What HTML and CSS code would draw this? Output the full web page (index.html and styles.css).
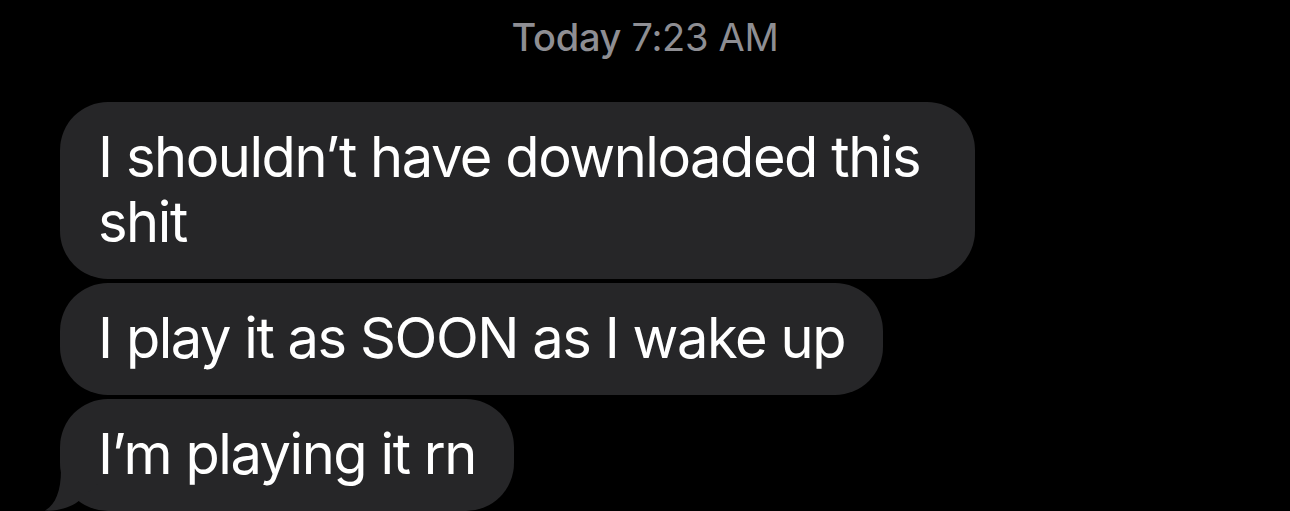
FILE: index.html
```html
<!DOCTYPE html>
<html>
<head>
<meta charset="utf-8">
<link rel="stylesheet" href="styles.css">
</head>
<body>
<div class="thread">
  <div class="stamp"><span class="day">Today</span> 7:23 AM</div>
  <div class="messages">
    <div class="bubble">I shouldn’t have downloaded this shit</div>
    <div class="bubble">I play it as SOON as I wake up</div>
    <div class="bubble last">I’m playing it rn
      <svg class="tail" width="60" height="50" viewBox="0 0 60 50"><path d="M17,9 C17,31 11,44 1,49.5 C14,50.5 28,46 36,39 L56,21 L56,0 L17,0 Z" fill="#262628"/></svg>
    </div>
  </div>
</div>
</body>
</html>
```
FILE: styles.css
```css
html, body {
  margin: 0;
  padding: 0;
  background: #000;
}
.thread {
  width: 1290px;
  height: 511px;
  overflow: hidden;
  font-family: Inter, "Noto Sans", sans-serif;
  padding-top: 14px;
  box-sizing: border-box;
}
.stamp {
  text-align: center;
  color: #8e8e93;
  font-size: 38px;
  line-height: 46px;
  font-weight: 400;
  letter-spacing: -0.3px;
}
.day {
  font-weight: 500;
}
.messages {
  margin-top: 42px;
  padding-left: 60px;
  display: flex;
  flex-direction: column;
  align-items: flex-start;
  gap: 4px;
}
.bubble {
  position: relative;
  box-sizing: border-box;
  max-width: 915px;
  background: #262628;
  color: #fff;
  font-size: 56px;
  line-height: 65px;
  letter-spacing: -1.45px;
  padding: 23px 38px 24px 38px;
  border-radius: 48px;
}
.tail {
  position: absolute;
  left: -16px;
  bottom: 0;
  display: block;
}
```
